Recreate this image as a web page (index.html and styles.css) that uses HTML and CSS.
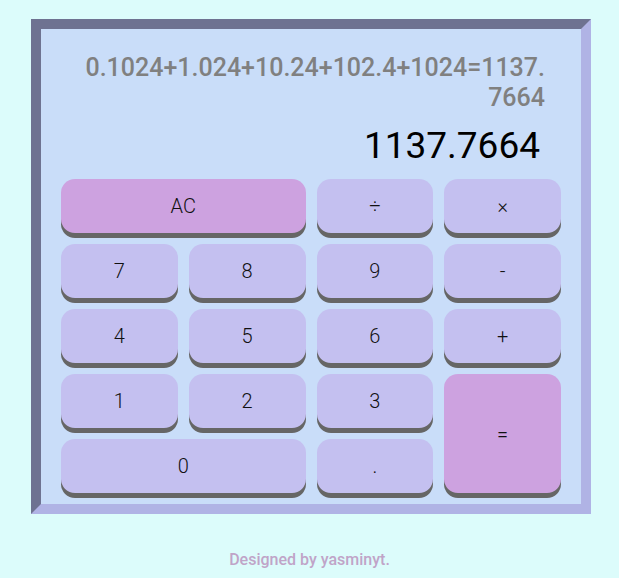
FILE: index.html
```html
<!DOCTYPE html>
<html lang="en">
<head>
<meta charset="utf-8">
<title>Calculator</title>
<link rel="stylesheet" href="styles.css">
</head>
<body>
<main class="calc">
  <div class="display">
    <div class="expr">0.1024+1.024+10.24+102.4+1024=1137.7664</div>
    <div class="result">1137.7664</div>
  </div>
  <div class="keys">
    <button class="key key-accent key-wide">AC</button>
    <button class="key">÷</button>
    <button class="key">×</button>
    <button class="key">7</button>
    <button class="key">8</button>
    <button class="key">9</button>
    <button class="key">-</button>
    <button class="key">4</button>
    <button class="key">5</button>
    <button class="key">6</button>
    <button class="key">+</button>
    <button class="key">1</button>
    <button class="key">2</button>
    <button class="key">3</button>
    <button class="key key-accent key-tall">=</button>
    <button class="key key-wide">0</button>
    <button class="key">.</button>
  </div>
</main>
<footer class="credit">Designed by yasminyt.</footer>
</body>
</html>
```
FILE: styles.css
```css
* { box-sizing: border-box; }

html, body {
  margin: 0;
  padding: 0;
}

body {
  background: #dcfcfb;
  font-family: Roboto, "Liberation Sans", sans-serif;
  padding-top: 19px;
}

.calc {
  width: 560px;
  margin-left: 31px;
  background: #c9ddf9;
  border: 10px solid;
  border-color: #6e7291 #b0b3e5 #b0b3e5 #6e7291;
  padding: 24px 20px 11px;
  display: flex;
  flex-direction: column;
}

.display {
  display: flex;
  flex-direction: column;
}

.expr {
  margin: 0 16px 0 16px;
  text-align: right;
  font-size: 25px;
  line-height: 30px;
  font-weight: 500;
  color: #808080;
  overflow-wrap: anywhere;
  word-break: break-all;
}

.result {
  margin-top: 11px;
  padding-right: 21px;
  text-align: right;
  font-size: 37px;
  line-height: 44px;
  color: #000;
}

.keys {
  margin-top: 11px;
  display: grid;
  grid-template-columns: repeat(4, 1fr);
  grid-auto-rows: 54px;
  gap: 11px;
}

.key {
  border: none;
  border-radius: 14px;
  background: #c4c0f0;
  box-shadow: 0 5px 0 #666666;
  font-family: Roboto, "Liberation Sans", sans-serif;
  font-weight: 300;
  font-size: 20px;
  color: #111;
  padding: 0;
  margin: 0;
}

.key-accent {
  background: #cda2e0;
}

.key-wide {
  grid-column: span 2;
}

.key-tall {
  grid-row: span 2;
}

.credit {
  margin-top: 36px;
  text-align: center;
  font-size: 16px;
  font-weight: 500;
  color: #c0a4c8;
}
```
